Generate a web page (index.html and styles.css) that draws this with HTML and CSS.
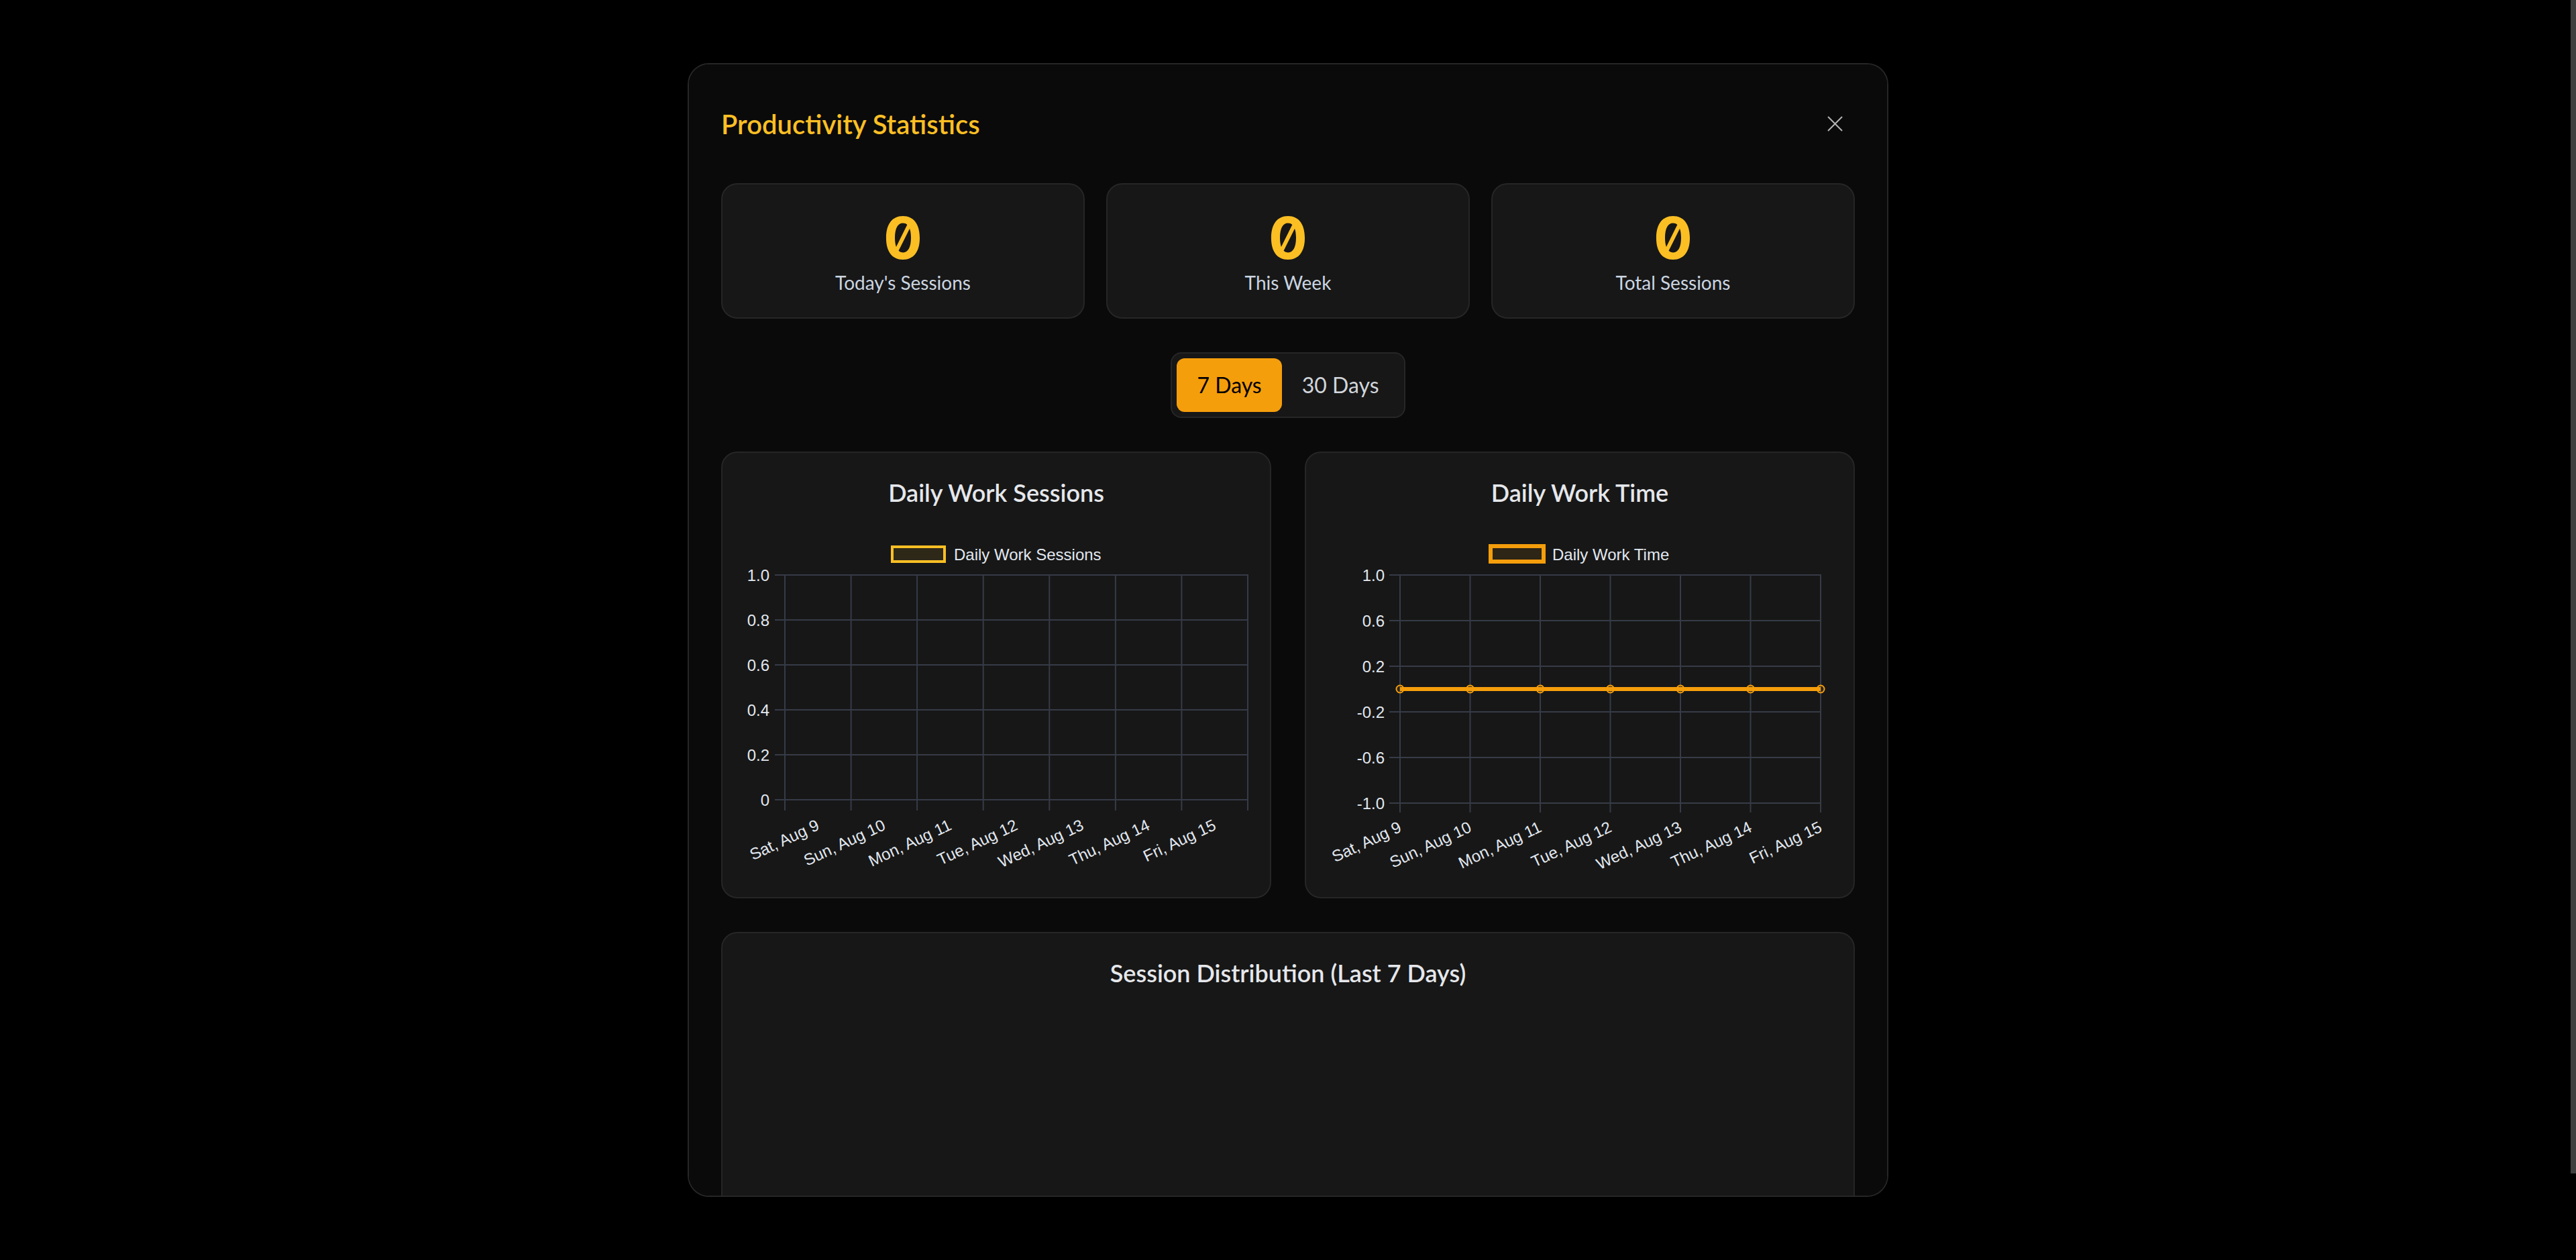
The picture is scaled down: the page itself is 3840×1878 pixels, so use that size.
FILE: index.html
```html
<!DOCTYPE html>
<html lang="en">
<head>
    <meta charset="UTF-8">
    <meta name="viewport" content="width=device-width, initial-scale=1.0">
    <title>Productivity Statistics</title>
    <link rel="stylesheet" href="styles.css">
</head>
<body>
    <div class="overlay">
        <div class="modal">
            <div class="modal-header">
                <h2>Productivity Statistics</h2>
                <button class="close-btn" aria-label="Close">
                    <svg width="23" height="23" viewBox="0 0 23 23">
                        <path d="M1 1 L22 22 M22 1 L1 22" stroke="#b4b4b4" stroke-width="2" fill="none"/>
                    </svg>
                </button>
            </div>

            <div class="stats-grid">
                <div class="stat-card">
                    <div class="stat-value">0</div>
                    <div class="stat-label">Today's Sessions</div>
                </div>
                <div class="stat-card">
                    <div class="stat-value">0</div>
                    <div class="stat-label">This Week</div>
                </div>
                <div class="stat-card">
                    <div class="stat-value">0</div>
                    <div class="stat-label">Total Sessions</div>
                </div>
            </div>

            <div class="range-toggle">
                <button class="range-btn active">7 Days</button>
                <button class="range-btn">30 Days</button>
            </div>

            <div class="charts-grid">
                <div class="chart-card">
                    <h3>Daily Work Sessions</h3>
                    <svg class="chart" width="752" height="512" viewBox="0 0 752 512">
                        <rect x="221" y="22" width="78" height="22" fill="#2e2818" stroke="#fbbf24" stroke-width="4"/>
                        <text class="legend" x="313" y="33">Daily Work Sessions</text>
                        <g class="grid">
                            <line x1="46" y1="64" x2="752" y2="64"/>
                            <line x1="46" y1="131" x2="752" y2="131"/>
                            <line x1="46" y1="198" x2="752" y2="198"/>
                            <line x1="46" y1="265" x2="752" y2="265"/>
                            <line x1="46" y1="332" x2="752" y2="332"/>
                            <line x1="46" y1="399" x2="752" y2="399"/>
                            <line x1="61" y1="64" x2="61" y2="415"/>
                            <line x1="159.6" y1="64" x2="159.6" y2="415"/>
                            <line x1="258.1" y1="64" x2="258.1" y2="415"/>
                            <line x1="356.7" y1="64" x2="356.7" y2="415"/>
                            <line x1="455.3" y1="64" x2="455.3" y2="415"/>
                            <line x1="553.9" y1="64" x2="553.9" y2="415"/>
                            <line x1="652.4" y1="64" x2="652.4" y2="415"/>
                            <line x1="751" y1="64" x2="751" y2="415"/>
                        </g>
                        <g class="y-labels">
                            <text x="38" y="64">1.0</text>
                            <text x="38" y="131">0.8</text>
                            <text x="38" y="198">0.6</text>
                            <text x="38" y="265">0.4</text>
                            <text x="38" y="332">0.2</text>
                            <text x="38" y="399">0</text>
                        </g>
                        <g class="x-labels">
                            <text transform="translate(110.3 435) rotate(-25)">Sat, Aug 9</text>
                            <text transform="translate(208.9 435) rotate(-25)">Sun, Aug 10</text>
                            <text transform="translate(307.4 435) rotate(-25)">Mon, Aug 11</text>
                            <text transform="translate(406 435) rotate(-25)">Tue, Aug 12</text>
                            <text transform="translate(504.6 435) rotate(-25)">Wed, Aug 13</text>
                            <text transform="translate(603.1 435) rotate(-25)">Thu, Aug 14</text>
                            <text transform="translate(701.7 435) rotate(-25)">Fri, Aug 15</text>
                        </g>
                    </svg>
                </div>

                <div class="chart-card">
                    <h3>Daily Work Time</h3>
                    <svg class="chart" width="752" height="512" viewBox="0 0 752 512">
                        <rect x="243" y="21" width="79" height="23" fill="#2d2516" stroke="#f59e0b" stroke-width="6"/>
                        <text class="legend" x="335" y="33">Daily Work Time</text>
                        <g class="grid">
                            <line x1="92" y1="64" x2="736" y2="64"/>
                            <line x1="92" y1="132" x2="736" y2="132"/>
                            <line x1="92" y1="200" x2="736" y2="200"/>
                            <line x1="92" y1="268" x2="736" y2="268"/>
                            <line x1="92" y1="336" x2="736" y2="336"/>
                            <line x1="92" y1="404" x2="736" y2="404"/>
                            <line x1="108" y1="64" x2="108" y2="418"/>
                            <line x1="212.5" y1="64" x2="212.5" y2="418"/>
                            <line x1="317" y1="64" x2="317" y2="418"/>
                            <line x1="421.5" y1="64" x2="421.5" y2="418"/>
                            <line x1="526" y1="64" x2="526" y2="418"/>
                            <line x1="630.5" y1="64" x2="630.5" y2="418"/>
                            <line x1="735" y1="64" x2="735" y2="418"/>
                        </g>
                        <line x1="108" y1="234" x2="735" y2="234" stroke="#f59e0b" stroke-width="6"/>
                        <g class="points">
                            <circle cx="108" cy="234" r="5.5"/>
                            <circle cx="212.5" cy="234" r="5.5"/>
                            <circle cx="317" cy="234" r="5.5"/>
                            <circle cx="421.5" cy="234" r="5.5"/>
                            <circle cx="526" cy="234" r="5.5"/>
                            <circle cx="630.5" cy="234" r="5.5"/>
                            <circle cx="735" cy="234" r="5.5"/>
                        </g>
                        <g class="y-labels">
                            <text x="85" y="64">1.0</text>
                            <text x="85" y="132">0.6</text>
                            <text x="85" y="200">0.2</text>
                            <text x="85" y="268">-0.2</text>
                            <text x="85" y="336">-0.6</text>
                            <text x="85" y="404">-1.0</text>
                        </g>
                        <g class="x-labels">
                            <text transform="translate(108 438) rotate(-25)">Sat, Aug 9</text>
                            <text transform="translate(212.5 438) rotate(-25)">Sun, Aug 10</text>
                            <text transform="translate(317 438) rotate(-25)">Mon, Aug 11</text>
                            <text transform="translate(421.5 438) rotate(-25)">Tue, Aug 12</text>
                            <text transform="translate(526 438) rotate(-25)">Wed, Aug 13</text>
                            <text transform="translate(630.5 438) rotate(-25)">Thu, Aug 14</text>
                            <text transform="translate(735 438) rotate(-25)">Fri, Aug 15</text>
                        </g>
                    </svg>
                </div>
            </div>

            <div class="chart-card wide">
                <h3>Session Distribution (Last 7 Days)</h3>
                <div class="chart-area"></div>
            </div>
        </div>
    </div>

    <div class="scroll-track">
        <div class="scroll-thumb"></div>
    </div>
</body>
</html>
```

FILE: styles.css
```css
* {
    margin: 0;
    padding: 0;
    box-sizing: border-box;
}

body {
    background: #000;
    height: 100vh;
    display: flex;
    overflow: hidden;
    font-family: 'Lato', 'Noto Sans', sans-serif;
}

.overlay {
    flex: 1;
    display: flex;
    align-items: center;
    justify-content: center;
    padding-left: 8px;
}

.scroll-track {
    width: 8px;
    background: #000;
}

.scroll-thumb {
    height: 1749px;
    background: #404040;
}

.modal {
    width: 1790px;
    max-height: 90vh;
    background: #0a0a0a;
    border: 2px solid #262626;
    border-radius: 32px;
    padding: 48px;
    overflow-y: auto;
    scrollbar-width: none;
}

.modal-header {
    height: 82px;
    display: flex;
    justify-content: space-between;
    align-items: center;
    margin-bottom: 47px;
}

.modal-header h2 {
    color: #fbbf24;
    font-size: 40px;
    font-weight: 600;
}

.close-btn {
    width: 60px;
    height: 60px;
    background: none;
    border: none;
    display: flex;
    align-items: center;
    justify-content: center;
    cursor: pointer;
}

.stats-grid {
    display: grid;
    grid-template-columns: repeat(3, 1fr);
    gap: 32px;
    margin-bottom: 50px;
}

.stat-card {
    background: #171717;
    border: 2px solid #262626;
    border-radius: 24px;
    padding: 37px 16px 32px;
    text-align: center;
}

.stat-value {
    font-family: 'Inter', sans-serif;
    font-variant-numeric: slashed-zero;
    font-feature-settings: "zero" 1;
    font-size: 86px;
    font-weight: 700;
    line-height: 86px;
    color: #fbbf24;
    margin-bottom: 4px;
}

.stat-label {
    font-size: 28px;
    line-height: 39px;
    color: #cbd5e1;
}

.range-toggle {
    width: fit-content;
    margin: 0 auto 50px;
    display: flex;
    background: #171717;
    border: 2px solid #262626;
    border-radius: 16px;
    padding: 7px;
}

.range-btn {
    height: 80px;
    padding: 0 30px;
    background: none;
    border: none;
    border-radius: 12px;
    font-family: inherit;
    font-size: 32px;
    color: #d1d5db;
    cursor: pointer;
}

.range-btn.active {
    background: #f59e0b;
    color: #000;
}

.charts-grid {
    display: grid;
    grid-template-columns: 1fr 1fr;
    gap: 50px;
    margin-bottom: 50px;
}

.chart-card {
    background: #171717;
    border: 2px solid #262626;
    border-radius: 24px;
    padding: 35px 32px 32px;
}

.chart-card h3 {
    text-align: center;
    color: #e5e7eb;
    font-size: 36px;
    font-weight: 600;
    line-height: 48px;
    margin-bottom: 35px;
}

.chart {
    display: block;
}

.chart text {
    font-family: 'Liberation Sans', Arial, sans-serif;
    font-size: 24px;
    fill: #e2e8f0;
    dominant-baseline: central;
}

.grid line {
    stroke: #363b47;
    stroke-width: 2;
}

.points circle {
    fill: rgba(245, 158, 11, 0.1);
    stroke: #f59e0b;
    stroke-width: 2;
}

.y-labels text,
.x-labels text {
    text-anchor: end;
}

.chart-area {
    height: 520px;
}
```
